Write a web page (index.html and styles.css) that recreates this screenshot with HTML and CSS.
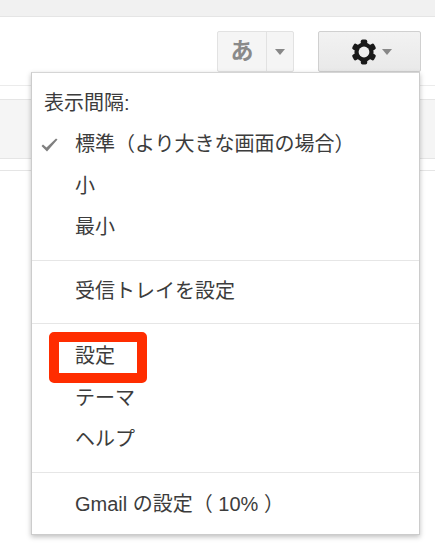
FILE: index.html
```html
<!DOCTYPE html>
<html lang="ja">
<head>
    <meta charset="UTF-8">
    <title>Gmail</title>
    <link rel="stylesheet" href="styles.css">
</head>
<body>
<div class="topBar"></div>
<div class="toolBar">
    <div class="inputBtn">
        <span class="inputLang">あ</span>
        <span class="inputArrow"><i class="caret"></i></span>
    </div>
    <div class="gearBtn">
        <svg class="gearIcon" width="26" height="26" viewBox="-13 -13 26 26">
            <g fill="#1a1a1a">
                <rect x="-3.200" y="-12.500" width="6.400" height="25" rx="1.800"/>
                <rect x="-3.200" y="-12.500" width="6.400" height="25" rx="1.800" transform="rotate(60)"/>
                <rect x="-3.200" y="-12.500" width="6.400" height="25" rx="1.800" transform="rotate(120)"/>
            </g>
            <circle r="7.500" fill="none" stroke="#1a1a1a" stroke-width="4.200"/>
            <circle r="5.400" fill="#efefef"/>
        </svg>
        <i class="caret"></i>
    </div>
</div>
<div class="grayBand"></div>
<div class="lowerLine"></div>
<div class="menu">
    <div class="menuGroup">
        <div class="menuHead">表示間隔:</div>
        <div class="menuItem">
            <svg class="check" width="19" height="16" viewBox="0 0 18 16">
                <path d="M1 9l1.500-1.500 3.500 3L15.500 1.500 17 2.500 6.500 14.500z" fill="#808080"/>
            </svg>
            標準（より大きな画面の場合）
        </div>
        <div class="menuItem">小</div>
        <div class="menuItem">最小</div>
    </div>
    <div class="menuGroup">
        <div class="menuItem">受信トレイを設定</div>
    </div>
    <div class="menuGroup tallGroup">
        <div class="menuItem">設定<span class="redMark"></span></div>
        <div class="menuItem">テーマ</div>
        <div class="menuItem">ヘルプ</div>
    </div>
    <div class="menuGroup">
        <div class="menuItem">Gmail の設定（ 10% ）</div>
    </div>
</div>
</body>
</html>
```

FILE: styles.css
```css
body {
    margin: 0;
    height: 550px;
    overflow: hidden;
    background: #fff;
    font-family: "Liberation Sans", "Noto Sans CJK JP", sans-serif;
    color: #3c3c3c;
}

.topBar {
    height: 16px;
    background: #f1f1f1;
    border-bottom: 1px solid #e5e5e5;
}

.toolBar {
    height: 54px;
    border-bottom: 1px solid #ebebeb;
    display: flex;
    justify-content: flex-end;
    align-items: flex-start;
    padding: 14px 14px 0 0;
}

.inputBtn {
    width: 77px;
    height: 41px;
    box-sizing: border-box;
    margin-right: 24px;
    display: flex;
    background: #f5f5f5;
    border: 1px solid #e2e2e2;
    border-radius: 2px;
}

.inputLang {
    width: 48px;
    border-right: 1px solid #e2e2e2;
    text-align: center;
    font-size: 23px;
    font-weight: bold;
    line-height: 38px;
    color: #8a8a8a;
}

.inputArrow {
    flex: 1;
    display: flex;
    align-items: center;
    justify-content: center;
}

.caret {
    width: 0;
    height: 0;
    border-left: 5.5px solid transparent;
    border-right: 5.5px solid transparent;
    border-top: 6px solid #888;
}

.gearBtn {
    width: 103px;
    height: 41px;
    box-sizing: border-box;
    display: flex;
    align-items: center;
    justify-content: center;
    gap: 5px;
    padding-left: 3px;
    background: linear-gradient(#f2f2f2, #e9e9e9);
    border: 1px solid #d0d0d0;
    border-radius: 2px;
}

.grayBand {
    margin-top: 13px;
    height: 58px;
    background: #f5f5f5;
    border-top: 1px solid #e5e5e5;
    border-bottom: 1px solid #e5e5e5;
}

.lowerLine {
    margin-top: 11px;
    border-top: 1px solid #e5e5e5;
}

.menu {
    position: absolute;
    left: 31px;
    top: 72px;
    width: 389px;
    height: 463px;
    box-sizing: border-box;
    background: #fff;
    border: 1px solid #ccc;
    border-top-color: #d5d5d5;
    box-shadow: 0 2px 5px rgba(0,0,0,0.25);
    font-size: 20px;
}

.menuGroup {
    padding: 10px 0 11px;
    border-bottom: 1px solid #e6e6e6;
}

.tallGroup {
    padding: 12px 0 11px;
}

.menuGroup:last-child {
    padding-top: 11px;
    border-bottom: 0;
}

.menuHead {
    padding-left: 12px;
    height: 41px;
    line-height: 41px;
}

.menuItem {
    position: relative;
    padding-left: 43px;
    height: 41.5px;
    line-height: 41.5px;
}

.check {
    position: absolute;
    left: 8px;
    top: 13px;
}

.redMark {
    position: absolute;
    left: 17px;
    top: -4px;
    width: 98px;
    height: 51px;
    box-sizing: border-box;
    border: 10px solid #ff2d00;
    border-radius: 5px;
}
```
